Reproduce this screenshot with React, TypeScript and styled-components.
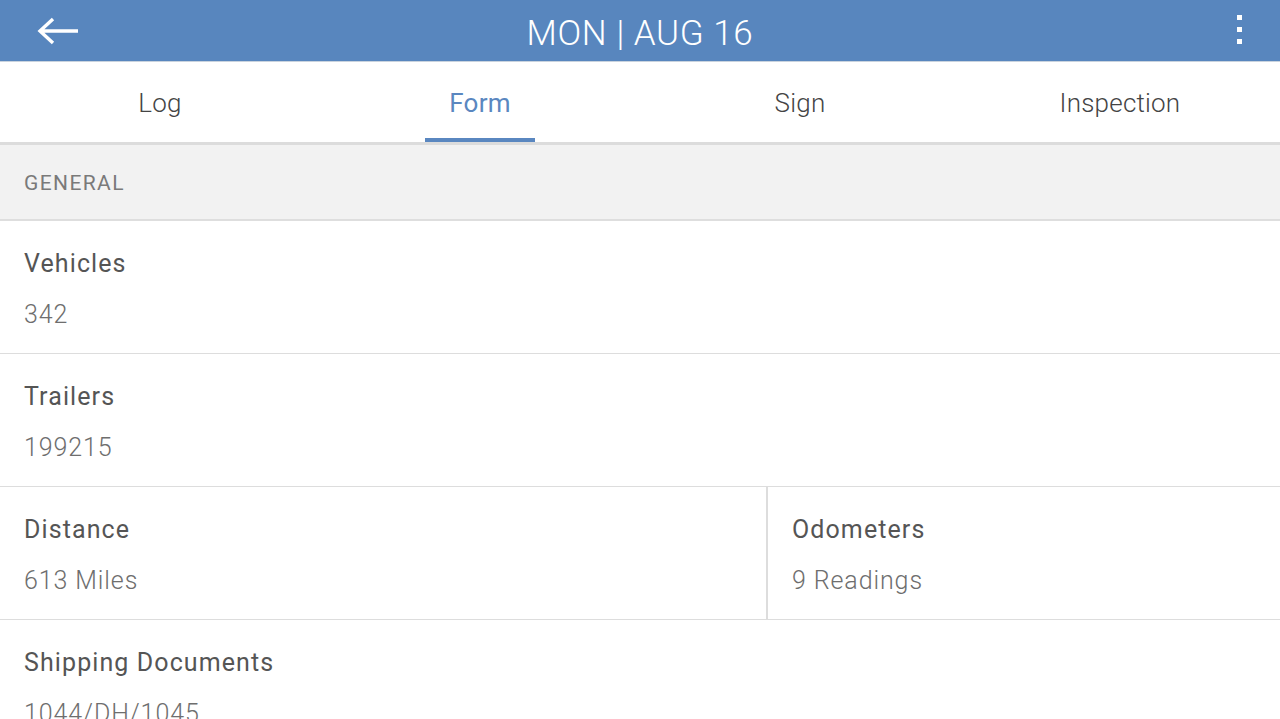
import styled, { createGlobalStyle } from 'styled-components';

const GlobalStyle = createGlobalStyle`
    body {
        margin: 0;
        font-family: Roboto, "Noto Sans", sans-serif;
        background: #fff;
        overflow: hidden;
    }
`;

const Page = styled.div`
    width: 1280px;
    height: 719px;
    overflow: hidden;
`;

const TopBar = styled.header`
    height: 61px;
    background-color: #5886be;
    border-bottom: 1px solid #c9d3de;
    display: grid;
    grid-template-columns: 120px 1fr 120px;
    align-items: center;
    color: #fff;
`;

const BackButton = styled.button`
    background: none;
    border: none;
    padding: 0 0 0 36px;
    height: 100%;
    display: flex;
    align-items: center;
    cursor: pointer;
`;

const Title = styled.h1`
    margin: 0;
    text-align: center;
    font-weight: 300;
    font-size: 35px;
    letter-spacing: 0.6px;
    padding-top: 6px;
`;

const MenuButton = styled.button`
    background: none;
    border: none;
    height: 100%;
    display: flex;
    flex-direction: column;
    align-items: flex-end;
    justify-content: center;
    gap: 7px;
    padding: 0 38px 2px 0;
    cursor: pointer;
`;

const Dot = styled.span`
    width: 5px;
    height: 5px;
    background: #fff;
`;

const Tabs = styled.nav`
    height: 80px;
    display: grid;
    grid-template-columns: repeat(4, 1fr);
    border-bottom: 3px solid #dcdcdc;
`;

const Tab = styled.div<{ $active?: boolean }>`
    position: relative;
    display: flex;
    align-items: center;
    justify-content: center;
    font-size: 26px;
    font-weight: ${(p) => (p.$active ? 400 : 300)};
    color: ${(p) => (p.$active ? '#5a87c0' : '#444')};
    letter-spacing: 0.2px;
    padding-top: 2px;

    &::after {
        content: '';
        display: ${(p) => (p.$active ? 'block' : 'none')};
        position: absolute;
        bottom: 0;
        left: 105px;
        right: 105px;
        height: 4px;
        background: #5a87c0;
    }
`;

const SectionHeader = styled.div`
    height: 76px;
    box-sizing: border-box;
    background: #f2f2f2;
    border-bottom: 2px solid #dedede;
    display: flex;
    align-items: center;
    padding: 2px 0 0 24px;
    font-size: 21px;
    color: #7a7a7a;
    letter-spacing: 1.4px;
`;

const Row = styled.div<{ $split?: boolean }>`
    display: grid;
    grid-template-columns: ${(p) => (p.$split ? '766px 1fr' : '1fr')};
    border-bottom: 1px solid #dddddd;
`;

const Field = styled.div`
    height: 132px;
    padding: 28px 0 0 24px;
    box-sizing: border-box;

    & + & {
        border-left: 2px solid #dddddd;
    }
`;

const Label = styled.div`
    font-size: 25px;
    color: #555;
    line-height: 30px;
    letter-spacing: 1.1px;
`;

const Value = styled.div`
    margin-top: 21px;
    font-size: 25px;
    font-weight: 300;
    color: #6e6e6e;
    line-height: 30px;
    letter-spacing: 0.9px;
`;

type Item = { label: string; value: string };

const rows: Item[][] = [
    [{ label: 'Vehicles', value: '342' }],
    [{ label: 'Trailers', value: '199215' }],
    [
        { label: 'Distance', value: '613 Miles' },
        { label: 'Odometers', value: '9 Readings' },
    ],
    [{ label: 'Shipping Documents', value: '1044/DH/1045' }],
];

function App() {
    return (
        <Page>
            <GlobalStyle />
            <TopBar>
                <BackButton aria-label="Back">
                    <svg width="44" height="30" viewBox="0 0 44 30">
                        <path
                            d="M42 15H5M17 3L4 15L17 27"
                            stroke="#fff"
                            strokeWidth="3.4"
                            fill="none"
                        />
                    </svg>
                </BackButton>
                <Title>MON | AUG 16</Title>
                <MenuButton aria-label="Menu">
                    <Dot />
                    <Dot />
                    <Dot />
                </MenuButton>
            </TopBar>
            <Tabs>
                <Tab>Log</Tab>
                <Tab $active>Form</Tab>
                <Tab>Sign</Tab>
                <Tab>Inspection</Tab>
            </Tabs>
            <SectionHeader>GENERAL</SectionHeader>
            {rows.map((row) => (
                <Row key={row[0].label} $split={row.length > 1}>
                    {row.map((item) => (
                        <Field key={item.label}>
                            <Label>{item.label}</Label>
                            <Value>{item.value}</Value>
                        </Field>
                    ))}
                </Row>
            ))}
        </Page>
    );
}

export default App;
